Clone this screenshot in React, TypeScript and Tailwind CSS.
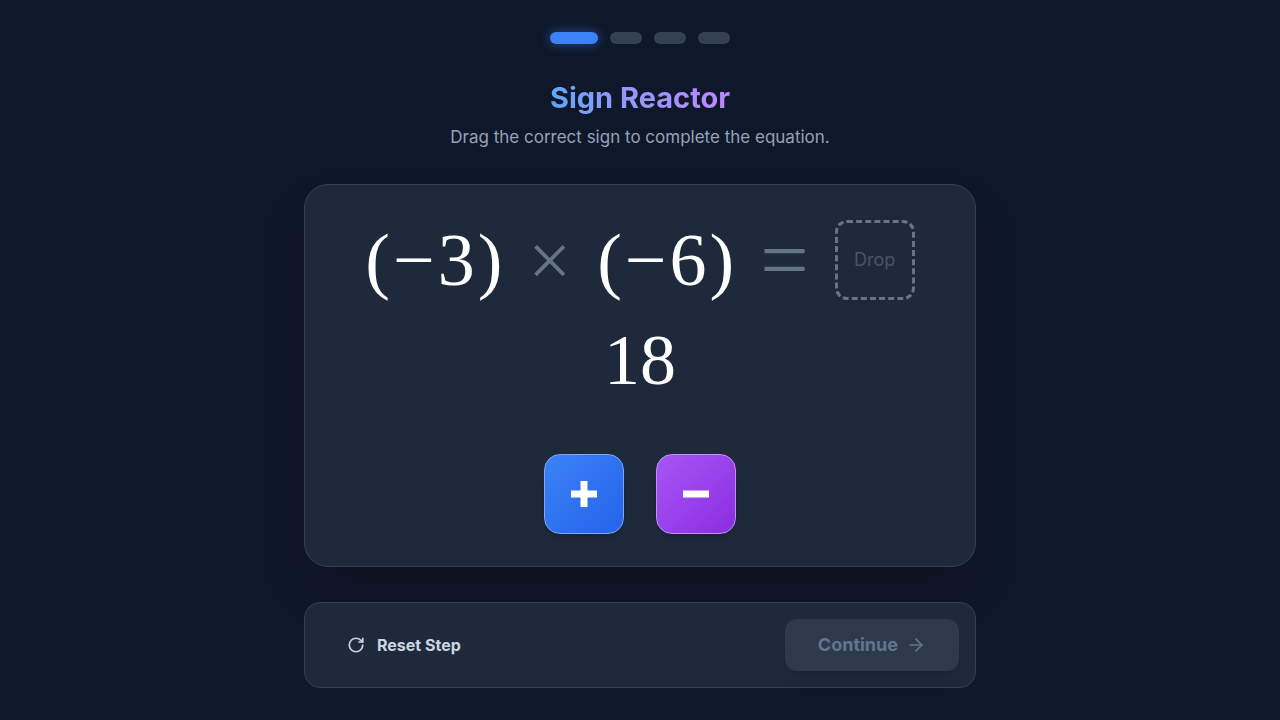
import React from 'react';
import { RotateCw, ArrowRight } from 'lucide-react';

const steps = [true, false, false, false];

function SignButton({ sign }: { sign: '+' | '-' }) {
  const isPlus = sign === '+';
  return (
    <button
      className={`w-20 h-20 rounded-2xl flex items-center justify-center shadow-lg border ${
        isPlus
          ? 'bg-gradient-to-br from-[#3b82f6] to-[#2563eb] border-[#7ea6f7]'
          : 'bg-gradient-to-br from-[#a855f7] to-[#8b2be0] border-[#c28ef5]'
      }`}
    >
      <svg width="28" height="28" viewBox="0 0 28 28">
        <rect x="1" y="10.5" width="26" height="7" fill="white" />
        {isPlus && <rect x="10.5" y="1" width="7" height="26" fill="white" />}
      </svg>
    </button>
  );
}

export default function App() {
  return (
    <div
      className="min-h-screen w-full bg-[#0f172a] flex flex-col items-center pt-8"
      style={{ fontFamily: 'Inter, "Noto Sans", sans-serif' }}
    >
      <div className="flex items-center gap-3 mb-9">
        {steps.map((active, i) => (
          <div
            key={i}
            className={
              active
                ? 'h-3 w-12 rounded-full bg-[#3b82f6] shadow-[0_0_10px_2px_rgba(59,130,246,0.35)]'
                : 'h-3 w-8 rounded-full bg-[#334155]'
            }
          />
        ))}
      </div>

      <h1 className="text-[29px] leading-9 font-bold bg-gradient-to-r from-[#60a5fa] to-[#c084fc] bg-clip-text text-transparent">
        Sign Reactor
      </h1>
      <p className="mt-[9px] text-[17px] leading-6 text-[#94a3b8]">Drag the correct sign to complete the equation.</p>

      <div className="mt-[35px] w-[672px] rounded-3xl bg-[#1e293b] border border-[#334155] shadow-2xl px-8 pt-[35px] pb-[32px] flex flex-col items-center">
        <div
          className="flex flex-wrap justify-center items-center gap-x-[26px] gap-y-6 text-white"
          style={{ fontFamily: '"Liberation Serif", "DejaVu Serif", serif' }}
        >
          <span className="text-[74px] leading-[72px] tracking-[3px] -mr-[3px]">(−3)</span>
          <span className="text-[76px] leading-[72px] text-[#64748b]">×</span>
          <span className="text-[74px] leading-[72px] tracking-[3px] -mr-[3px]">(−6)</span>
          <span className="text-[86px] leading-[72px] text-[#64748b]">=</span>
          <div className="w-20 h-20 rounded-xl border-[3px] border-dashed border-[#64748b] flex items-center justify-center">
            <span className="text-lg text-[#475569]" style={{ fontFamily: 'Inter, sans-serif' }}>
              Drop
            </span>
          </div>
          <span className="text-[72px] leading-[72px] w-full text-center">18</span>
        </div>

        <div className="mt-[58px] flex items-center gap-8">
          <SignButton sign="+" />
          <SignButton sign="-" />
        </div>
      </div>

      <div className="mt-[35px] w-[672px] rounded-2xl bg-[#1e293b] border border-[#334155] p-4 flex items-center justify-between">
        <button className="flex items-center gap-3 px-[26px] py-3 text-base font-bold text-[#cbd5e1]">
          <RotateCw size={18} strokeWidth={2.25} />
          Reset Step
        </button>
        <button className="flex items-center gap-2 px-[33px] py-3 rounded-xl bg-[#334155]/70 text-lg font-bold text-[#64748b] shadow-lg">
          Continue
          <ArrowRight size={20} />
        </button>
      </div>
    </div>
  );
}
